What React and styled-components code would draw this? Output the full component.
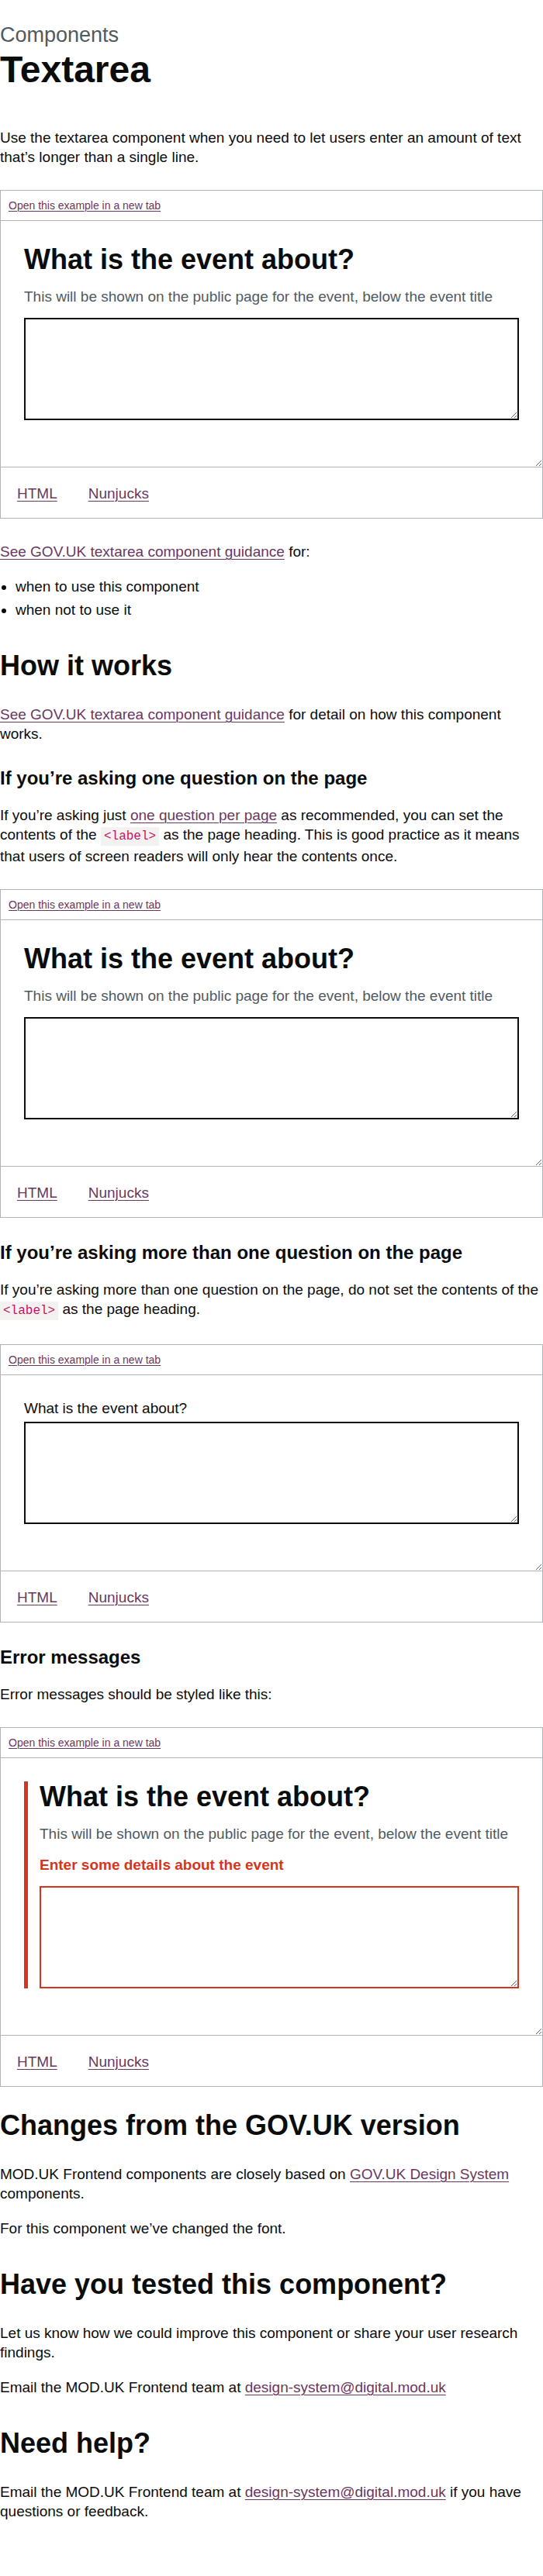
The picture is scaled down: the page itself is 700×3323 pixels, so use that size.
import React from "react";
import styled, { createGlobalStyle } from "styled-components";

const GlobalStyle = createGlobalStyle`
  html, body {
    margin: 0;
    padding: 0;
    background: #ffffff;
  }
  body {
    font-family: "Liberation Sans", Arial, sans-serif;
    color: #0b0c0c;
    -webkit-font-smoothing: antialiased;
  }
`;

const Page = styled.main`
  width: 700px;
  padding: 30px 0 49px;
`;

const Caption = styled.span`
  display: block;
  font-size: 27px;
  line-height: 30px;
  color: #505a5f;
  margin-bottom: 5px;
`;

const H1 = styled.h1`
  font-size: 48px;
  line-height: 50px;
  font-weight: 700;
  margin: 0 0 50px;
`;

const H2 = styled.h2`
  font-size: 36px;
  line-height: 40px;
  font-weight: 700;
  margin: ${(p) => p.$top ?? 40}px 0 30px;
`;

const H3 = styled.h3`
  font-size: 24px;
  line-height: 30px;
  font-weight: 700;
  margin: 30px 0 20px;
`;

const P = styled.p`
  font-size: 19px;
  line-height: 25px;
  margin: 0 0 20px;
`;

const Link = styled.a`
  color: #69385e;
  text-decoration: underline;
  text-decoration-thickness: 1px;
  text-underline-offset: 0.16em;
  cursor: pointer;
`;

const Code = styled.code`
  font-family: "Liberation Mono", "DejaVu Sans Mono", monospace;
  font-size: 16px;
  color: #c5135f;
  background: #f3f2f1;
  padding: 3px 4px;
`;

const List = styled.ul`
  margin: 0 0 20px;
  padding-left: 20px;
  list-style: disc;

  li {
    font-size: 19px;
    line-height: 25px;
    margin-bottom: 5px;
  }
  li:last-child {
    margin-bottom: 0;
  }
`;

/* example block */

const Example = styled.div`
  border: 1px solid #b1b4b6;
  margin: 30px 0;
`;

const ExampleBar = styled.div`
  padding: 9px 10px;
  border-bottom: 1px solid #b1b4b6;
  font-size: 14px;
  line-height: 20px;
`;

const Frame = styled.div`
  padding: 30px;
  border-bottom: 1px solid #b1b4b6;
  overflow: auto;
  resize: vertical;
`;

const FormGroup = styled.div`
  margin-bottom: 30px;
  ${(p) =>
    p.$error &&
    `
    border-left: 5px solid #d4351c;
    padding-left: 15px;
  `}
`;

const LabelHeading = styled.h1`
  font-size: 36px;
  line-height: 40px;
  font-weight: 700;
  margin: 0 0 15px;
`;

const Label = styled.label`
  display: block;
  font-size: 19px;
  line-height: 25px;
  margin-bottom: 5px;
`;

const Hint = styled.div`
  font-size: 19px;
  line-height: 25px;
  color: #505a5f;
  margin-bottom: 15px;
`;

const ErrorMessage = styled.p`
  font-size: 19px;
  line-height: 25px;
  font-weight: 700;
  color: #d4351c;
  margin: 0 0 15px;
`;

const TextArea = styled.textarea`
  display: block;
  box-sizing: border-box;
  width: 100%;
  height: 132px;
  margin: 0;
  padding: 5px;
  font-family: inherit;
  font-size: 19px;
  line-height: 1.25;
  border: 2px solid ${(p) => (p.$error ? "#d4351c" : "#0b0c0c")};
  border-radius: 0;
  background: #fff;
  outline: none;
`;

const Tabs = styled.div`
  display: flex;
  padding: 21px 0 19px 1px;
`;

const Tab = styled.a`
  font-size: 19px;
  line-height: 25px;
  padding: 0 20px;
  color: #69385e;
  text-decoration: underline;
  text-decoration-thickness: 1px;
  text-underline-offset: 0.16em;
`;

function ExampleBox({ children }) {
  return (
    <Example>
      <ExampleBar>
        <Link>Open this example in a new tab</Link>
      </ExampleBar>
      <Frame>{children}</Frame>
      <Tabs>
        <Tab>HTML</Tab>
        <Tab>Nunjucks</Tab>
      </Tabs>
    </Example>
  );
}

const HINT = "This will be shown on the public page for the event, below the event title";

export default function App() {
  return (
    <>
      <GlobalStyle />
      <Page>
        <Caption>Components</Caption>
        <H1>Textarea</H1>
        <P>
          Use the textarea component when you need to let users enter an amount of text that’s
          longer than a single line.
        </P>

        <ExampleBox>
          <FormGroup>
            <LabelHeading>What is the event about?</LabelHeading>
            <Hint>{HINT}</Hint>
            <TextArea rows={5} />
          </FormGroup>
        </ExampleBox>

        <P>
          <Link>See GOV.UK textarea component guidance</Link> for:
        </P>
        <List>
          <li>when to use this component</li>
          <li>when not to use it</li>
        </List>

        <H2>How it works</H2>
        <P>
          <Link>See GOV.UK textarea component guidance</Link> for detail on how this component
          works.
        </P>

        <H3>If you’re asking one question on the page</H3>
        <P>
          If you’re asking just <Link>one question per page</Link> as recommended, you can set the
          contents of the <Code>&lt;label&gt;</Code> as the page heading. This is good practice as
          it means that users of screen readers will only hear the contents once.
        </P>

        <ExampleBox>
          <FormGroup>
            <LabelHeading>What is the event about?</LabelHeading>
            <Hint>{HINT}</Hint>
            <TextArea rows={5} />
          </FormGroup>
        </ExampleBox>

        <H3>If you’re asking more than one question on the page</H3>
        <P>
          If you’re asking more than one question on the page, do not set the contents of the{" "}
          <Code>&lt;label&gt;</Code> as the page heading.
        </P>

        <ExampleBox>
          <FormGroup>
            <Label>What is the event about?</Label>
            <TextArea rows={5} />
          </FormGroup>
        </ExampleBox>

        <H3>Error messages</H3>
        <P>Error messages should be styled like this:</P>

        <ExampleBox>
          <FormGroup $error>
            <LabelHeading>What is the event about?</LabelHeading>
            <Hint>{HINT}</Hint>
            <ErrorMessage>Enter some details about the event</ErrorMessage>
            <TextArea rows={5} $error />
          </FormGroup>
        </ExampleBox>

        <H2 $top={30}>Changes from the GOV.UK version</H2>
        <P>
          MOD.UK Frontend components are closely based on <Link>GOV.UK Design System</Link>{" "}
          components.
        </P>
        <P>For this component we’ve changed the font.</P>

        <H2>Have you tested this component?</H2>
        <P>
          Let us know how we could improve this component or share your user research findings.
        </P>
        <P>
          Email the MOD.UK Frontend team at <Link>design-system@digital.mod.uk</Link>
        </P>

        <H2>Need help?</H2>
        <P>
          Email the MOD.UK Frontend team at <Link>design-system@digital.mod.uk</Link> if you have
          questions or feedback.
        </P>
      </Page>
    </>
  );
}
